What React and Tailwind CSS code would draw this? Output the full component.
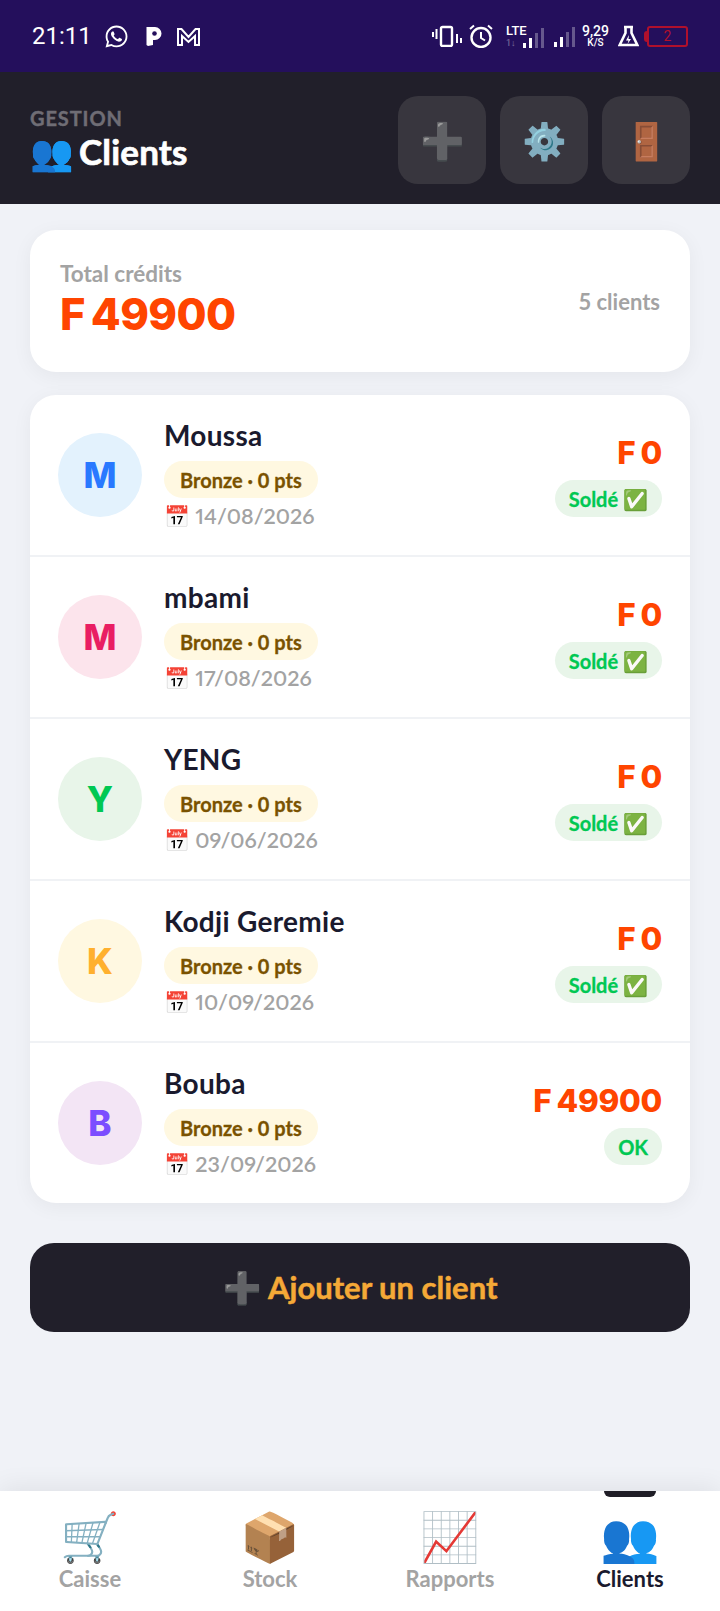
import React from "react";
import { FaWhatsapp } from "react-icons/fa";

const clients = [
  { initial: "M", name: "Moussa", date: "14/08/2026", avatar: "bg-[#e3f2fd] text-[#2979ff]", amount: "F 0", status: "Soldé ✅" },
  { initial: "M", name: "mbami", date: "17/08/2026", avatar: "bg-[#fce4ec] text-[#e91e63]", amount: "F 0", status: "Soldé ✅" },
  { initial: "Y", name: "YENG", date: "09/06/2026", avatar: "bg-[#e8f5e9] text-[#00c853]", amount: "F 0", status: "Soldé ✅" },
  { initial: "K", name: "Kodji Geremie", date: "10/09/2026", avatar: "bg-[#fff8e1] text-[#ffb02e]", amount: "F 0", status: "Soldé ✅" },
  { initial: "B", name: "Bouba", date: "23/09/2026", avatar: "bg-[#f3e5f5] text-[#7c4dff]", amount: "F 49900", status: "OK" },
];

const tabs = [
  { icon: "🛒", label: "Caisse" },
  { icon: "📦", label: "Stock" },
  { icon: "📈", label: "Rapports" },
  { icon: "👥", label: "Clients", active: true },
];

const Bars = ({ lit }) => (
  <div className="flex items-end gap-[3px] h-[20px]">
    {[5, 10, 15, 20].map((h, i) => (
      <svg key={h} width="3" height={h} className={i < lit ? "opacity-100" : "opacity-30"}>
        <rect width="3" height={h} fill="#fff" />
      </svg>
    ))}
  </div>
);

const StatusBar = () => (
  <div className="h-[72px] bg-[#240f5c] flex items-center justify-between pl-8 pr-[32px] text-white [font-family:Roboto,sans-serif] shrink-0">
    <div className="flex items-center">
      <span className="text-[24px] leading-none">21:11</span>
      <FaWhatsapp className="w-[25px] h-[25px] ml-[12px]" />
      <svg width="16" height="20" viewBox="0 0 16 20" className="ml-[17px]">
        <path d="M0.500 1h8.500a6.500 6.500 0 0 1 0 13H7v5l-5 1-1.500-1z" fill="#fff" />
        <circle cx="8.500" cy="7.500" r="2.300" fill="#240f5c" />
      </svg>
      <svg width="23" height="19" viewBox="0 0 23 19" className="ml-[15px]">
        <path d="M1 18V2h3.500l7 8 7-8H22v16h-4V9l-6.500 6L5 9v9z" fill="none" stroke="#fff" strokeWidth="2" />
      </svg>
    </div>
    <div className="flex items-center">
      <svg width="30" height="22" viewBox="0 0 30 22">
        <path d="M1 7v5M4.500 4v10M25 9v9M29 13v5" stroke="#fff" strokeWidth="2" />
        <rect x="9" y="2" width="11" height="19" rx="1.500" fill="none" stroke="#fff" strokeWidth="2.400" />
      </svg>
      <svg width="24" height="24" viewBox="0 0 24 24" className="ml-[7px]">
        <circle cx="12" cy="13.500" r="9.500" fill="none" stroke="#fff" strokeWidth="2.400" />
        <path d="M12 8v6l4 2.500M1 5l4-3.500M23 5l-4-3.500" fill="none" stroke="#fff" strokeWidth="2" />
      </svg>
      <div className="relative w-[38px] h-[24px] ml-[13px]">
        <span className="absolute left-0 top-0 text-[13px] leading-[13px] font-medium">LTE</span>
        <span className="absolute left-0 bottom-0 text-[9px] leading-[9px] opacity-40">1↓</span>
        <div className="absolute right-0 bottom-0">
          <Bars lit={2} />
        </div>
      </div>
      <div className="ml-[10px] pt-[2px]">
        <Bars lit={2} />
      </div>
      <div className="flex flex-col items-center ml-[7px] leading-none font-medium">
        <span className="text-[14px] leading-[13px]">9,29</span>
        <span className="text-[10px] leading-[10px]">K/S</span>
      </div>
      <svg width="21" height="22" viewBox="0 0 21 22" className="ml-[9px]">
        <path d="M6 2h9M7.500 2v6L1.700 20h17.600L13.500 8V2" fill="none" stroke="#fff" strokeWidth="2.600" />
        <path d="M11 10l-3 5.500h2.500L9.500 19l3.500-5h-2.500z" fill="#fff" />
      </svg>
      <div className="flex items-center ml-[5px]">
        <div className="w-[3px] h-[11px] bg-[#b0102c] rounded-l-sm" />
        <div className="w-[41px] h-[21px] border-2 border-[#b0102c] rounded-[3px] flex items-center justify-center text-[#b0102c] text-[14px] leading-none">
          2
        </div>
      </div>
    </div>
  </div>
);

const Header = () => (
  <div className="h-[132px] bg-[#211f2a] flex items-center justify-between pl-[30px] pr-[30px] pt-[4px] shrink-0">
    <div className="-mt-[2px]">
      <div className="text-[20px] leading-[24px] font-bold tracking-[0.9px] text-[#6f6d75] [-webkit-text-stroke:0.4px_#6f6d75]">GESTION</div>
      <div className="text-[35px] leading-[42px] font-bold text-white tracking-[0.2px] [word-spacing:-4px] whitespace-nowrap [-webkit-text-stroke:0.7px_#fff]">👥 Clients</div>
    </div>
    <div className="flex gap-[14px]">
      {["➕", "⚙️", "🚪"].map((icon) => (
        <div key={icon} className="w-[88px] h-[88px] rounded-[20px] bg-[#38363e] flex items-center justify-center text-[36px] leading-none">
          {icon}
        </div>
      ))}
    </div>
  </div>
);

const ClientRow = ({ client, last }) => (
  <div className={`flex items-center pl-[28px] pr-[28px] ${last ? "h-[160px]" : "h-[162px] border-b-2 border-[#f0f2f5]"}`}>
    <div className={`w-[84px] h-[84px] rounded-full flex items-center justify-center text-[35px] font-extrabold leading-none shrink-0 [font-family:Inter,sans-serif] ${client.avatar}`}>
      {client.initial}
    </div>
    <div className="ml-[22px] flex flex-col items-start">
      <div className="text-[28px] leading-[34px] font-bold tracking-[0.3px] text-[#1a1a2e]">{client.name}</div>
      <div className="h-[37px] mt-[9px] px-[16px] rounded-full bg-[#fff8e1] text-[#7a5200] text-[20px] font-bold flex items-center whitespace-nowrap [-webkit-text-stroke:0.3px_#7a5200]">
        Bronze · 0 pts
      </div>
      <div className="text-[21.500px] leading-[32px] mt-[2px] font-semibold text-[#a3a3a3] whitespace-nowrap proportional-nums">
        <span className="text-[21px]">📅</span> {client.date}
      </div>
    </div>
    <div className="ml-auto flex flex-col items-end">
      <div className="text-[31.500px] leading-[40px] font-extrabold text-[#ff4500] tracking-[-0.3px] [word-spacing:-1.500px] [font-family:Inter,sans-serif]">{client.amount}</div>
      <div className="h-[37px] mt-[7px] px-[14px] rounded-full bg-[#e8f5e9] text-[#00c853] text-[20px] font-bold flex items-center whitespace-nowrap [-webkit-text-stroke:0.3px_#00c853]">
        {client.status}
      </div>
    </div>
  </div>
);

const BottomNav = () => (
  <div className="h-[120px] bg-white shadow-[0_-4px_24px_rgba(0,0,0,0.07)] grid grid-cols-4 shrink-0">
    {tabs.map((tab) => (
      <div key={tab.label} className="relative flex flex-col items-center pt-[17px]">
        {tab.active && <div className="absolute top-0 w-[52px] h-[6px] bg-[#1f1d26] rounded-b-md" />}
        <div className="text-[48px] leading-[56px]">{tab.icon}</div>
        <div className={`text-[22px] leading-[26px] mt-[2px] font-bold ${tab.active ? "text-[#1a1a2e]" : "text-[#a3a3a3]"}`}>{tab.label}</div>
      </div>
    ))}
  </div>
);

export default function App() {
  return (
    <div className="w-[720px] h-[1611px] flex flex-col bg-[#f0f2f7] overflow-hidden [font-family:Lato,sans-serif]">
      <StatusBar />
      <Header />
      <main className="flex-1 px-[30px] pt-[26px]">
        <div className="h-[142px] bg-white rounded-[26px] shadow-[0_4px_20px_rgba(0,0,0,0.05)] flex items-center justify-between pl-[30px] pr-[30px]">
          <div>
            <div className="text-[22.500px] leading-[26px] font-bold text-[#a3a3a3]">Total crédits</div>
            <div className="text-[43.500px] leading-[54px] font-extrabold text-[#ff4500] tracking-[-0.6px] [word-spacing:-3px] [font-family:Inter,sans-serif]">F 49900</div>
          </div>
          <div className="text-[22px] font-bold text-[#a3a3a3]">5 clients</div>
        </div>
        <div className="mt-[23px] bg-white rounded-[26px] shadow-[0_4px_20px_rgba(0,0,0,0.05)] overflow-hidden">
          {clients.map((client, i) => (
            <ClientRow key={client.name} client={client} last={i === clients.length - 1} />
          ))}
        </div>
        <button className="w-full h-[89px] mt-[40px] rounded-[24px] bg-[#211f2a] text-[#f5a937] text-[31px] font-bold [-webkit-text-stroke:0.5px_#f5a937]">
          ➕ Ajouter un client
        </button>
      </main>
      <BottomNav />
    </div>
  );
}
